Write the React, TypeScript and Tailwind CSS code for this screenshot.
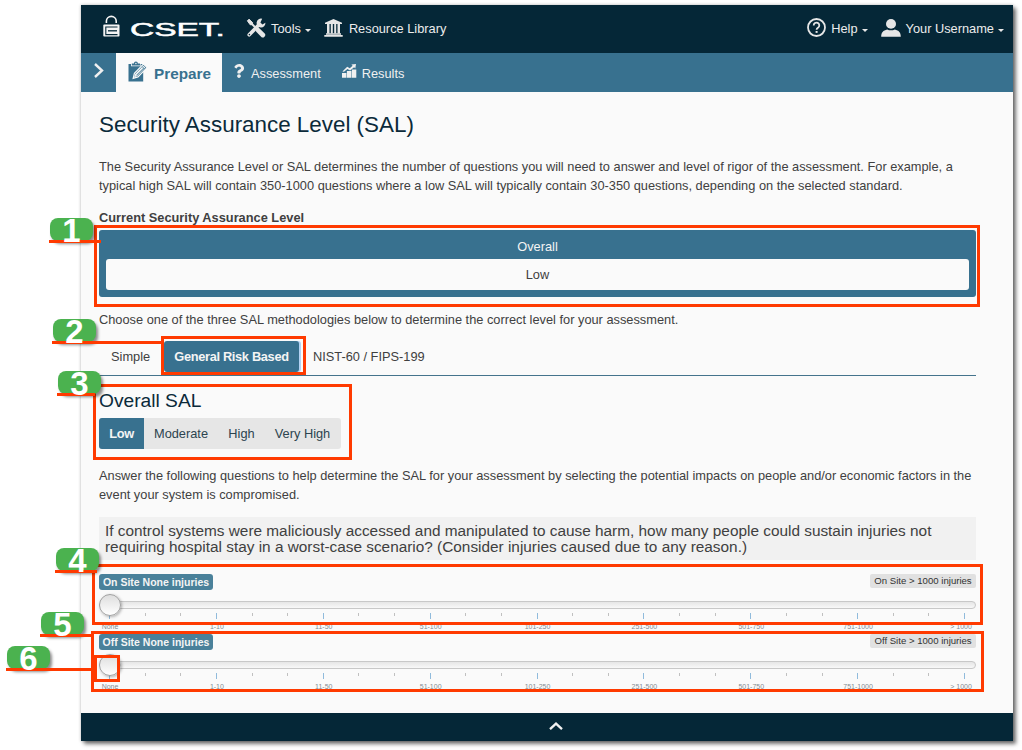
import type { ReactNode } from "react";
import { FaQuestion } from "react-icons/fa";

const scale = ["None", "1-10", "11-50", "51-100", "101-250", "251-500", "501-750", "751-1000", "> 1000"];
const ticks = Array.from({ length: 25 }, (_, i) => i);

function Caret() {
  return <span className="ml-[4px] mt-[2px] border-x-[3px] border-t-[3px] border-x-transparent border-t-[#e8e8e8]" />;
}

function LockIcon() {
  return (
    <svg className="mb-[2px] h-[22px] w-[17px]" viewBox="0 0 17 22" fill="none" stroke="#f4f4f4">
      <path d="M3.4 8V6a4.9 4.6 0 0 1 9.8 0v2" strokeWidth="1.6" />
      <rect x="0.3" y="9.6" width="16.2" height="12" rx="0.8" fill="#f4f4f4" stroke="none" />
      <path d="M14.5 12H2.8v7.6h11.7" stroke="#052737" strokeWidth="1.1" />
      <path d="M5 15.8h9" stroke="#052737" strokeWidth="1.3" />
    </svg>
  );
}

function ToolsIcon() {
  return (
    <svg className="mb-[2px] h-[20px] w-[20px]" viewBox="0 0 20 20" fill="none" stroke="#e6e6e6">
      <path d="M1.4 2.8L3 1.2l3.6 3.4-.4 2-2 .2z" fill="#e6e6e6" strokeWidth="1" />
      <path d="M5 5l7.6 7.8" strokeWidth="2" />
      <path d="M12.2 12.4l4.6 4.6" strokeWidth="4.8" strokeLinecap="round" />
      <path d="M3.2 16.8l10-10.2" strokeWidth="3.6" strokeLinecap="round" />
      <path d="M16.2 0.8a4.4 4.4 0 1 0 3.2 4l-3 1.6-2-1.8z" fill="#e6e6e6" stroke="none" />
      <circle cx="3.4" cy="16.6" r="0.8" fill="#052737" stroke="none" />
    </svg>
  );
}

function LibraryIcon() {
  return (
    <svg className="mb-[3px] h-[18px] w-[19px]" viewBox="0 0 19 18" fill="#e6e6e6">
      <path d="M9.5 0L18 3.7V5H1V3.7z" />
      <path d="M3 5h2.5v9.5H3zM6.8 5h2v9.5h-2zM10.2 5h2v9.5h-2zM13.5 5H16v9.5h-2.5z" />
      <path d="M2 14.2h15v1.6H2zM0.3 16h18.4v1.8H0.3z" />
    </svg>
  );
}

function ClipboardIcon() {
  return (
    <svg className="h-[21px] w-[20px]" viewBox="0 0 20 21">
      <path d="M0.5 3H3v2.3h9.6V3h2.6v17.5H0.5z" fill="#38718f" />
      <path d="M3.8 4.5V2.6h2.1a2 2 0 0 1 4 0H12v1.9z" fill="#38718f" />
      <circle cx="7.9" cy="2.5" r="0.7" fill="#fafafa" />
      <path d="M5.2 17.4l1.2-5.1 9-9.2 3.7 3.5-9.1 9.3z" fill="#38718f" stroke="#fafafa" strokeWidth="1.2" />
      <path d="M6 16.6l1.2-3.6 8.1-8.3 2 1.9-8.1 8.4z" fill="#fafafa" />
      <path d="M8.4 14.4l7.3-7.4M14.4 5.8l1.8 1.8" stroke="#38718f" strokeWidth="0.9" />
    </svg>
  );
}

function ChartIcon() {
  return (
    <svg className="h-[14px] w-[15px]" viewBox="0 0 15 14" fill="#f0f0f0">
      <path d="M0 9h4.4v4.7H0zM4.9 6.9h4.5v6.8H4.9zM9.9 5.4h4.4v8.3H9.9z" />
      <path d="M0.4 7.4l4.8-4.6 2.6 1.4L10.6 1.8 9.4 0.4 14 0l-0.7 4.4-1.2-1.1-4 3.2-2.7-1.4-3.4 2.6z" />
    </svg>
  );
}

function HelpIcon() {
  return (
    <svg className="mb-[3px] h-[19px] w-[19px]" viewBox="0 0 19 19" fill="none" stroke="#e6e6e6">
      <circle cx="9.5" cy="9.5" r="8.5" strokeWidth="1.8" />
      <path d="M6.7 7.4a2.8 2.8 0 1 1 4.5 2.2c-1 .7-1.6 1-1.6 2.1" strokeWidth="1.8" />
      <path d="M9.6 13v1.9" strokeWidth="2" />
    </svg>
  );
}

function PersonIcon() {
  return (
    <svg className="mb-[3px] h-[18px] w-[20px]" viewBox="0 0 20 18" fill="#e6e6e6">
      <ellipse cx="10" cy="4.9" rx="5" ry="4.9" />
      <path d="M0.2 17.8c0-4.5 1.9-6.4 6-7.4 2.2 1.2 5.4 1.2 7.6 0 4.1 1 6 2.9 6 7.4z" />
    </svg>
  );
}

function Header() {
  return (
    <header className="flex h-[48px] items-center bg-[#052737] text-[12.8px] text-[#ececec]">
      <div className="ml-[22px] flex items-center">
        <div className="mb-[4px]"><LockIcon /></div>
        <div className="ml-[10px] mt-[1px] w-[96px]">
          <span className="block w-[46px] origin-left scale-x-[1.86] text-[18px] leading-[20px] text-white [-webkit-text-stroke:0.5px_white]">CSET.</span>
        </div>
      </div>
      <div className="ml-[20px] flex items-center">
        <ToolsIcon />
        <span className="ml-[5px]">Tools</span>
        <Caret />
      </div>
      <div className="ml-[13px] flex items-center">
        <LibraryIcon />
        <span className="ml-[6px] whitespace-nowrap">Resource Library</span>
      </div>
      <div className="ml-auto flex items-center">
        <HelpIcon />
        <span className="ml-[5px]">Help</span>
        <Caret />
      </div>
      <div className="ml-[13px] mr-[9px] flex items-center">
        <PersonIcon />
        <span className="ml-[5px] whitespace-nowrap">Your Username</span>
        <Caret />
      </div>
    </header>
  );
}

function Nav() {
  return (
    <nav className="flex h-[39px] items-stretch bg-[#38718f] text-[12.8px] text-[#f0f0f0]">
      <div className="flex w-[35px] justify-center pt-[10px]">
        <svg className="h-[15px] w-[10px]" viewBox="0 0 10 15" fill="none" stroke="#f0f0f0" strokeWidth="2.4">
          <path d="M1 1l7 6.5L1 14" />
        </svg>
      </div>
      <div className="flex w-[106px] items-center bg-[#fafafa] pl-[12px] text-[15.3px] font-bold text-[#38718f]">
        <div className="mb-[3px]"><ClipboardIcon /></div>
        <span className="ml-[6px] mt-[3px]">Prepare</span>
      </div>
      <div className="flex items-center pl-[11px]">
        <FaQuestion className="mb-[3px] h-[14px] w-[12px]" />
        <span className="ml-[6px] mt-[2px]">Assessment</span>
      </div>
      <div className="flex items-center pl-[21px]">
        <div className="mb-[3px]"><ChartIcon /></div>
        <span className="ml-[5px] mt-[2px]">Results</span>
      </div>
    </nav>
  );
}

function InjurySlider({ site }: { site: string }) {
  return (
    <div className="h-[60px]">
      <div className="flex items-start justify-between">
        <span className="h-[16px] w-[114px] whitespace-nowrap rounded-[3px] bg-[#4a819a] text-center text-[10.5px] font-bold leading-[16px] text-[#f4f4f4]">
          {site} Site None injuries
        </span>
        <span className="h-[14px] w-[106px] whitespace-nowrap rounded-[2px] bg-[#e1e1e1] text-center text-[9.6px] leading-[14px] text-[#333]">
          {site} Site &gt; 1000 injuries
        </span>
      </div>
      <div className="mt-[4px] flex h-[22px] items-center">
        <span className="z-[1] h-[22px] w-[22px] shrink-0 rounded-full border border-[#a0a0a0] bg-gradient-to-b from-[#dedede] to-white shadow-[1px_1px_3px_rgba(0,0,0,0.3)]" />
        <span className="-ml-[22px] h-[8px] flex-1 rounded-full border border-[#c8c8c8] bg-gradient-to-b from-[#e6e6e6] to-[#f8f8f8]" />
      </div>
      <div className="-mt-[3px] ml-[10px] mr-[11px] flex h-[6px] items-start justify-between">
        {ticks.map((i) => (
          <span key={i} className={i % 3 === 0 ? "h-[6px] w-px bg-[#90bbdc]" : "h-[3px] w-px bg-[#c0c0c0]"} />
        ))}
      </div>
      <div className="ml-[11px] mr-[11px] mt-[4px] flex justify-between text-[7px] leading-[8px] text-[#848c92]">
        {scale.map((label, i) => (
          <span key={label} className={i === 8 ? "flex w-0 justify-center whitespace-nowrap [text-indent:-8px]" : "flex w-0 justify-center whitespace-nowrap"}>
            {label}
          </span>
        ))}
      </div>
    </div>
  );
}

function Content() {
  return (
    <main className="h-[621px] pl-[18px] pr-[37px] text-[12.8px] text-[#404040]">
      <h1 className="pt-[20px] text-[22.4px] leading-[26px] text-[#0b2a3a]">Security Assurance Level (SAL)</h1>
      <p className="mt-[19px] leading-[19px]">
        The Security Assurance Level or SAL determines the number of questions you will need to answer and level of rigor of the assessment. For example, a
        typical high SAL will contain 350-1000 questions where a low SAL will typically contain 30-350 questions, depending on the selected standard.
      </p>
      <h2 className="mt-[13px] font-bold leading-[19px]">Current Security Assurance Level</h2>
      <section className="mt-[3px] h-[67px] rounded-[3px] bg-[#38718f] px-[7px] text-center">
        <div className="h-[29px] leading-[33px] text-[#f4f4f4]">Overall</div>
        <div className="h-[31px] rounded-[3px] bg-[#fafafa] leading-[32px]">Low</div>
      </section>
      <p className="mt-[13px] leading-[19px]">Choose one of the three SAL methodologies below to determine the correct level for your assessment.</p>
      <div className="mt-[12px] flex h-[35px] border-b border-[#44738c] leading-[31px]">
        <span className="w-[65px] pl-[12px]">Simple</span>
        <span className="h-[31px] w-[135px] whitespace-nowrap rounded-[3px] bg-[#38718f] text-center font-bold tracking-[-0.32px] text-[#f4f4f4] shadow-[2px_0_0_#b4d3f4]">General Risk Based</span>
        <span className="ml-[14px] whitespace-nowrap">NIST-60 / FIPS-199</span>
      </div>
      <h2 className="mt-[13px] text-[19.2px] leading-[24px] text-[#0b2a3a]">Overall SAL</h2>
      <div className="mt-[5px] flex h-[31px] w-[242px] overflow-hidden rounded-[3px] bg-[#e6e6e6] leading-[31px] text-[#2c444f]">
        <span className="w-[45px] bg-[#38718f] text-center font-bold tracking-[-0.3px] text-[#f4f4f4]">Low</span>
        <span className="w-[74px] text-center">Moderate</span>
        <span className="w-[47px] text-center">High</span>
        <span className="w-[75px] whitespace-nowrap text-center">Very High</span>
      </div>
      <p className="mt-[17px] leading-[19px]">
        Answer the following questions to help determine the SAL for your assessment by selecting the potential impacts on people and/or economic factors in the
        event your system is compromised.
      </p>
      <p className="mt-[13px] h-[43px] bg-[#f1f1f1] pl-[6px] pr-[20px] pt-[6px] text-[15.36px] leading-[16px]">
        If control systems were maliciously accessed and manipulated to cause harm, how many people could sustain injuries not
        requiring hospital stay in a worst-case scenario? (Consider injuries caused due to any reason.)
      </p>
      <div className="mt-[14px]">
        <InjurySlider site="On" />
        <InjurySlider site="Off" />
      </div>
    </main>
  );
}

function Badge({ place, leader, children }: { place: string; leader: string; children: ReactNode }) {
  return (
    <div className={`absolute z-20 h-[23px] w-[43px] rounded-[8px] bg-[#4bb24f] text-center font-bold text-white shadow-[2px_3px_3px_rgba(0,0,0,0.45)] ${place}`}>
      <div className={`absolute -left-px top-[22px] h-[3px] bg-[#ff3a00] ${leader}`} />
      <span className="relative block text-[33px] leading-[25px]">{children}</span>
    </div>
  );
}

const outlines = [
  "left-[94px] top-[225px] w-[886px] h-[82px]",
  "left-[161px] top-[336px] w-[145px] h-[39px]",
  "left-[93px] top-[384px] w-[259px] h-[76px]",
  "left-[92px] top-[564px] w-[891px] h-[61px]",
  "left-[91px] top-[631px] w-[893px] h-[61px]",
  "left-[94px] top-[655px] w-[26px] h-[27px]",
];

const badges = [
  { place: "left-[50px] top-[218px]", leader: "w-[52px]" },
  { place: "left-[53px] top-[319px]", leader: "w-[110px]" },
  { place: "left-[58px] top-[371px]", leader: "w-[38px]" },
  { place: "left-[56px] top-[548px]", leader: "w-[42px]" },
  { place: "left-[41px] top-[612px]", leader: "w-[53px]" },
  { place: "left-[7px] top-[646px]", leader: "w-[91px]" },
];

export default function App() {
  return (
    <div className="relative h-[750px] w-[1022px] overflow-hidden bg-white pl-[81px] pt-[5px] font-['Liberation_Sans',Arial,sans-serif]">
      <div className="flex h-[736px] w-[932px] flex-col bg-[#fafafa] shadow-[3px_3px_4px_rgba(0,0,0,0.55),0_0_3px_rgba(0,0,0,0.25)]">
        <Header />
        <Nav />
        <Content />
        <footer className="flex h-[28px] items-center justify-center bg-[#052737]">
          <svg className="mb-[2px] ml-[17px] h-[8px] w-[14px]" viewBox="0 0 14 8" fill="none" stroke="#f0f0f0" strokeWidth="2.3">
            <path d="M1 7.2l6-5.6 6 5.6" />
          </svg>
        </footer>
      </div>
      {outlines.map((place) => (
        <div key={place} className={`absolute z-10 border-[3px] border-[#ff3a00] ${place}`} />
      ))}
      {badges.map((badge, i) => (
        <Badge key={badge.place} place={badge.place} leader={badge.leader}>{i + 1}</Badge>
      ))}
    </div>
  );
}
